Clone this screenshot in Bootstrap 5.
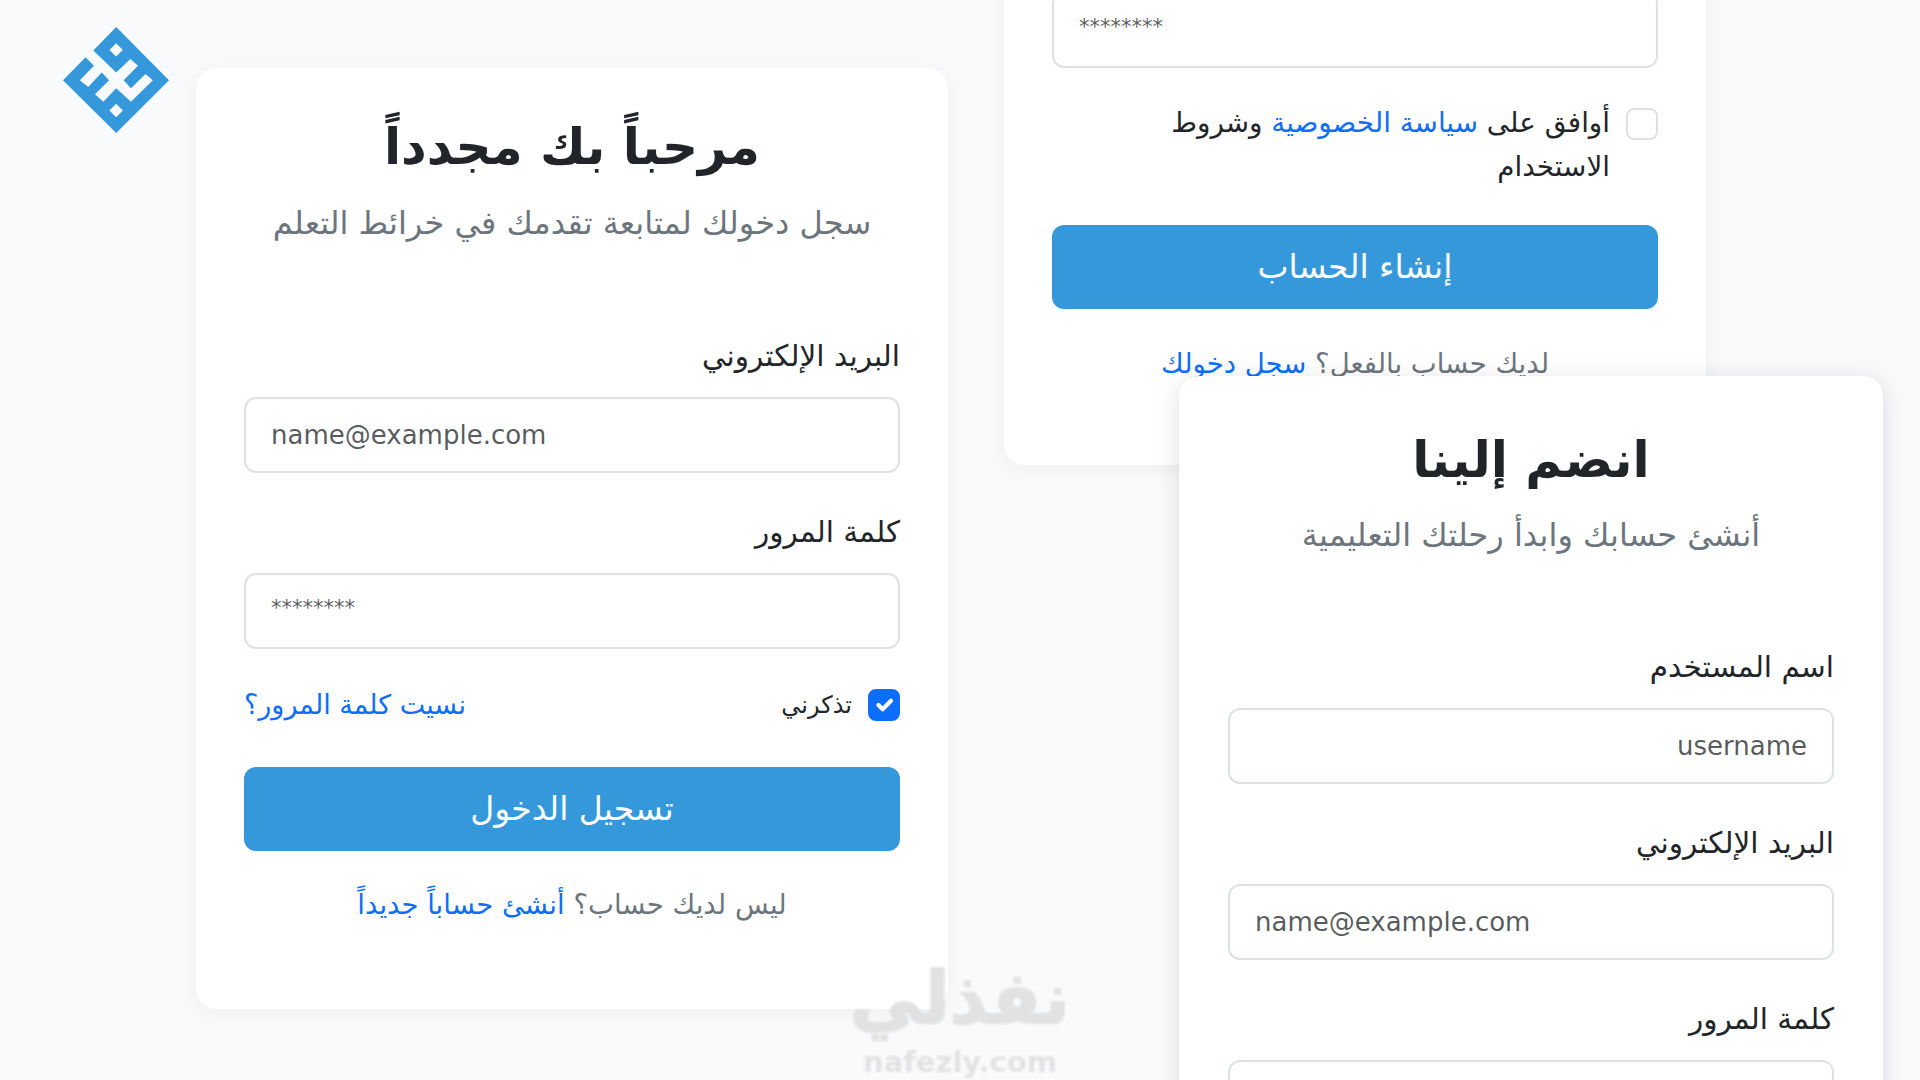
<!DOCTYPE html>
<html lang="ar" dir="rtl">
<head>
  <meta charset="UTF-8" />
  <meta name="viewport" content="width=device-width, initial-scale=1.0"/>
  <title>نفذلي</title>
  <link href="https://cdn.jsdelivr.net/npm/bootstrap@5.3.3/dist/css/bootstrap.min.css" rel="stylesheet">
  <style>
    body {
      background-color: #f9fafc;
      height: 100vh;
      overflow: hidden;
      font-family: "DejaVu Sans", sans-serif;
      color: #212529;
    }

    .stage { position: relative; width: 1920px; height: 1080px; overflow: hidden; }

    .site-logo { position: absolute; left: 63px; top: 27px; width: 106px; height: 106px; }

    .auth-card {
      position: absolute;
      background: #fff;
      border: 0;
      border-radius: 20px;
      box-shadow: 0 4px 20px rgba(0,0,0,0.05);
    }
    .card-login { left: 196px; top: 68px; width: 752px; height: 941px; padding: 48px; }
    .card-terms { left: 1004px; top: -300px; width: 702px; height: 765px; padding: 48px; display: flex; flex-direction: column; justify-content: flex-end; }
    .card-signup { left: 1179px; top: 376px; width: 704px; height: 1100px; padding: 53px 49px 49px; box-shadow: 0 4px 24px rgba(0,0,0,0.13); }

    .auth-title { font-size: 50px; font-weight: 700; line-height: 62px; margin: 0 0 26px; text-align: center; }
    .card-signup .auth-title { margin-bottom: 25px; }
    .auth-sub { font-size: 32px; line-height: 38px; color: #6c757d; text-align: center; margin: 0 0 95px; }
    .card-signup .auth-sub { margin-bottom: 94px; }

    .auth-label { display: block; font-size: 29.5px; line-height: 38px; margin-bottom: 22px; }
    .auth-input.form-control {
      height: 76px;
      flex-shrink: 0;
      font-size: 26px;
      padding: 0 25px;
      border: 2px solid #dee2e6;
      border-radius: 12px;
      margin-bottom: 40px;
    }
    .pw-input.form-control { font-size: 21px; padding-bottom: 7px; }
    .card-terms .auth-input.form-control { margin-bottom: 33px; }

    .remember-row { height: 32px; margin-bottom: 46px; font-size: 24px; }
    .auth-check.form-check-input {
      width: 32px;
      height: 32px;
      margin: 0;
      border: 2px solid #dee2e6;
      border-radius: 8px;
      flex-shrink: 0;
    }
    .auth-check.form-check-input:checked { border-color: #0d6efd; }
    .card-terms .auth-check.form-check-input { margin-top: 7px; }
    .auth-link { color: #0d6efd; text-decoration: none; }
    .forgot-link { font-size: 27px; }

    .auth-btn.btn {
      display: block;
      width: 100%;
      height: 84px;
      background: #3498db;
      border: 0;
      border-radius: 12px;
      color: #fff;
      font-size: 33px;
    }
    .auth-foot { font-size: 27.5px; line-height: 36px; text-align: center; color: #6c757d; margin: 35px 0 0; }
    .card-terms .auth-foot { margin-top: 36px; }
    .foot-gap { height: 36px; }

    .terms-row { font-size: 27.8px; line-height: 44px; margin-bottom: 36px; }

    .watermark {
      position: absolute;
      left: 840px;
      top: 960px;
      width: 240px;
      text-align: center;
      color: #dedede;
      filter: blur(1px);
      opacity: .85;
    }
    .wm-ar { font-size: 72px; font-weight: 700; line-height: 76px; -webkit-text-stroke: 2px #dedede; }
    .wm-en { font-size: 29px; font-weight: 700; line-height: 36px; margin-top: 8px; }
  </style>
</head>
<body>
  <div class="stage">

    <svg class="site-logo" viewBox="70 80 315 315">
      <path fill="#3498db" fill-rule="evenodd" d="M228 80L385 238L228 395L70 238L137 170L162 195L120 238L145 258L185 215L207 238L165 280L190 302L228 262L272 302L337 238L315 220L272 262L250 238L293 195L270 175L228 215L160 150ZM228 128L208 148L228 168L248 148ZM228 308L208 328L228 348L248 328Z"/>
    </svg>

    <!-- login -->
    <div class="card auth-card card-login">
      <h1 class="auth-title">مرحباً بك مجدداً</h1>
      <p class="auth-sub">سجل دخولك لمتابعة تقدمك في خرائط التعلم</p>
      <label class="auth-label">البريد الإلكتروني</label>
      <input type="email" dir="ltr" class="form-control auth-input" placeholder="name@example.com">
      <label class="auth-label">كلمة المرور</label>
      <input type="text" dir="ltr" class="form-control auth-input pw-input" placeholder="********">
      <div class="d-flex justify-content-between align-items-center remember-row">
        <div class="d-flex align-items-center gap-3">
          <input type="checkbox" class="form-check-input auth-check" checked>
          <span>تذكرني</span>
        </div>
        <a href="#" class="auth-link forgot-link">نسيت كلمة المرور؟</a>
      </div>
      <button class="btn auth-btn">تسجيل الدخول</button>
      <p class="auth-foot">ليس لديك حساب؟ <a href="#" class="auth-link">أنشئ حساباً جديداً</a></p>
    </div>

    <!-- signup, scrolled part -->
    <div class="card auth-card card-terms">
      <input type="text" dir="ltr" class="form-control auth-input pw-input" placeholder="********">
      <div class="d-flex gap-3 terms-row">
        <input type="checkbox" class="form-check-input auth-check">
        <span>أوافق على <a href="#" class="auth-link">سياسة الخصوصية</a> وشروط<br>الاستخدام</span>
      </div>
      <button class="btn auth-btn">إنشاء الحساب</button>
      <p class="auth-foot">لديك حساب بالفعل؟ <a href="#" class="auth-link">سجل دخولك</a></p>
      <div class="foot-gap"></div>
    </div>

    <!-- signup -->
    <div class="card auth-card card-signup">
      <h1 class="auth-title">انضم إلينا</h1>
      <p class="auth-sub">أنشئ حسابك وابدأ رحلتك التعليمية</p>
      <label class="auth-label">اسم المستخدم</label>
      <input type="text" class="form-control auth-input" placeholder="username">
      <label class="auth-label">البريد الإلكتروني</label>
      <input type="email" dir="ltr" class="form-control auth-input" placeholder="name@example.com">
      <label class="auth-label">كلمة المرور</label>
      <input type="text" dir="ltr" class="form-control auth-input">
    </div>

    <div class="watermark">
      <div class="wm-ar">نفذلي</div>
      <div class="wm-en" dir="ltr">nafezly.com</div>
    </div>
  </div>

  <script src="https://cdn.jsdelivr.net/npm/bootstrap@5.3.3/dist/js/bootstrap.bundle.min.js"></script>
</body>
</html>
